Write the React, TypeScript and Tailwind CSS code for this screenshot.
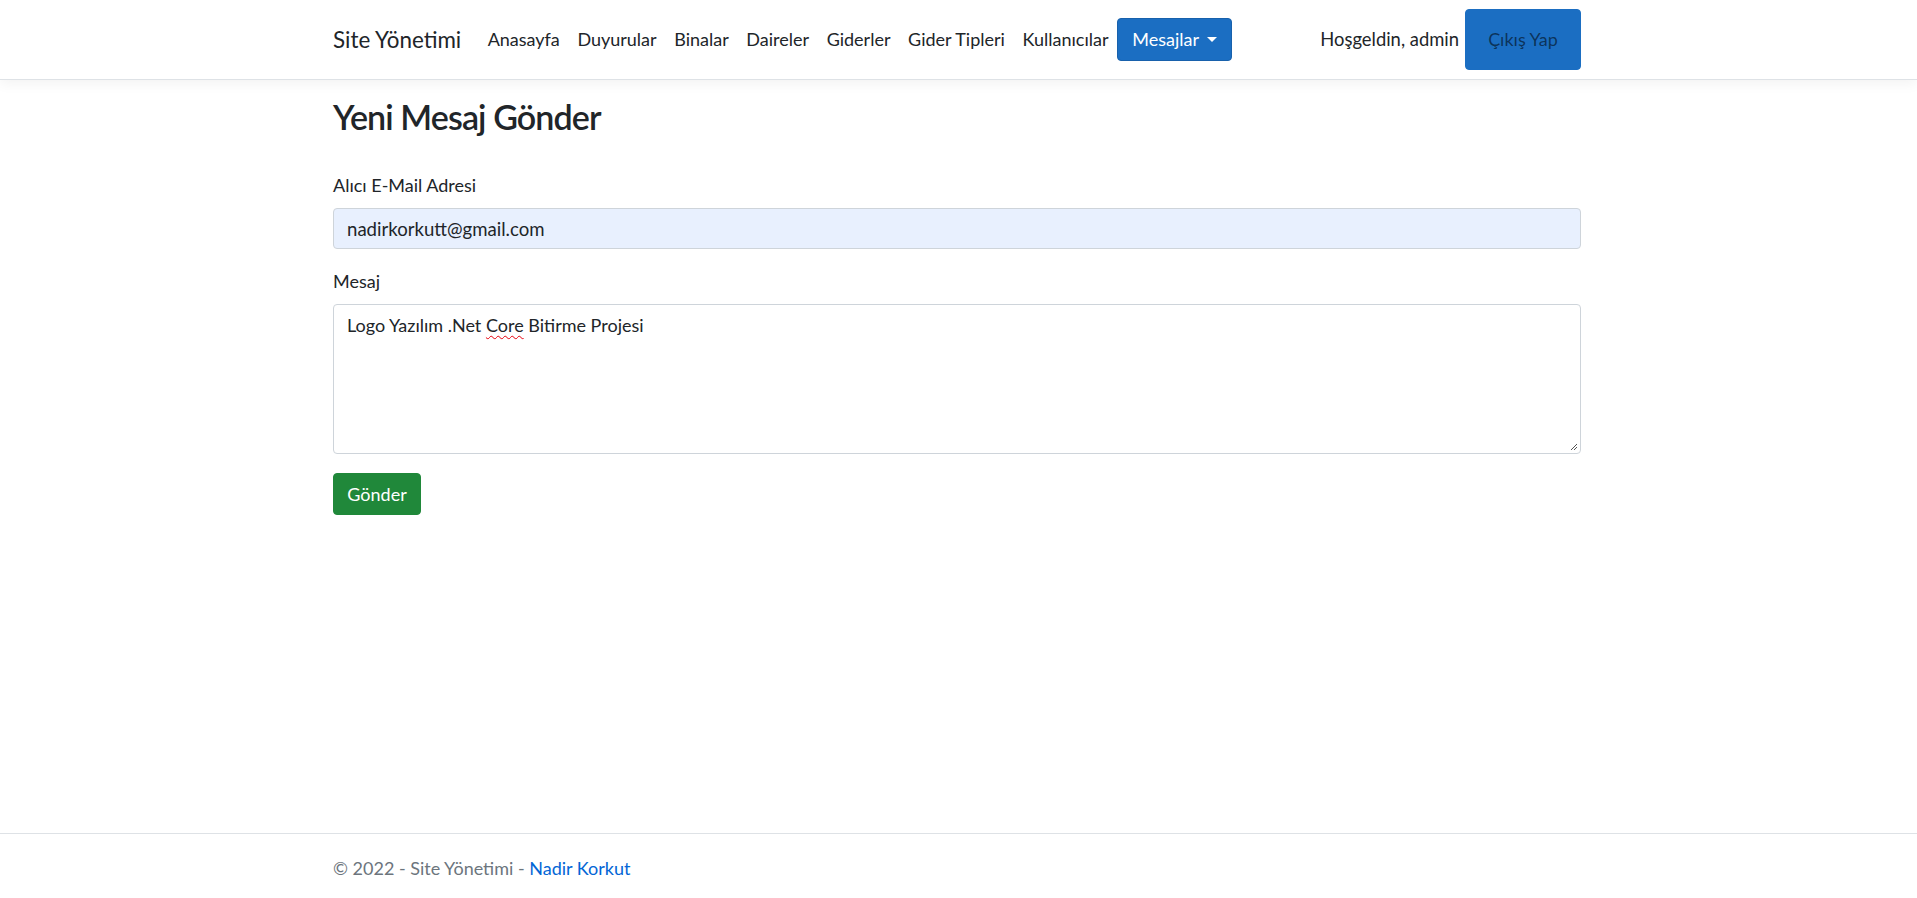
import React from 'react'

const navLinks = ['Anasayfa', 'Duyurular', 'Binalar', 'Daireler', 'Giderler', 'Gider Tipleri', 'Kullanıcılar']

function Navbar() {
  return (
    <header className="h-[80px] shrink-0 border-b border-[#dee2e6] bg-white shadow-[0_4px_12px_rgba(0,0,0,0.05)]">
      <div className="mx-auto flex h-full w-[1251px] items-center pr-[3px]">
        <a href="#" className="mr-[17.6px] text-[22.4px] leading-[33px] text-[#212529]">
          Site Yönetimi
        </a>
        <nav className="flex items-center">
          {navLinks.map((l) => (
            <a key={l} href="#" className="px-[8.8px] text-[#212529]">
              {l}
            </a>
          ))}
          <button
            type="button"
            className="flex h-[43px] items-center rounded-[4px] border border-[#1861ac] bg-[#1b6ec2] px-[14px] text-white"
          >
            Mesajlar
            <span className="ml-[8px] inline-block h-0 w-0 border-x-[5.3px] border-t-[5.3px] border-x-transparent border-t-white" />
          </button>
        </nav>
        <div className="ml-auto flex items-center gap-[6px]">
          <span className="text-[18.4px]">Hoşgeldin, admin</span>
          <button
            type="button"
            className="h-[61px] w-[116px] rounded-[4px] border border-[#1b6ec2] bg-[#1b6ec2] text-[rgba(0,0,0,0.55)]"
          >
            Çıkış Yap
          </button>
        </div>
      </div>
    </header>
  )
}

function ResizeGrip() {
  return (
    <svg className="absolute bottom-[2px] right-[2px]" width="9" height="9" viewBox="0 0 9 9">
      <path d="M8 2 L2 8 M8 5 L5 8" stroke="#555" strokeWidth="1" />
    </svg>
  )
}

export default function App() {
  return (
    <div className="flex h-screen flex-col bg-white text-[18px] leading-[26.4px] text-[#212529] [font-family:Lato,'Liberation_Sans',sans-serif]">
      <Navbar />

      <main className="mx-auto w-[1251px] pr-[3px] pt-[16px]">
        <h2 className="text-[34px] font-semibold leading-[42px] tracking-[-0.9px]">Yeni Mesaj Gönder</h2>

        <form className="mt-[34px]" onSubmit={(e) => e.preventDefault()}>
          <label className="mb-[9.6px] block">Alıcı E-Mail Adresi</label>
          <input
            type="email"
            readOnly
            defaultValue="nadirkorkutt@gmail.com"
            className="block h-[41px] w-full rounded-[4px] border border-[#ced4da] bg-[#e8f0fe] px-[13px] text-[18.6px] text-[#212529] outline-none"
          />

          <label className="mb-[9.6px] mt-[19px] block">Mesaj</label>
          <div className="relative h-[150px] w-full rounded-[4px] border border-[#ced4da] bg-white px-[13px] pt-[6.6px]">
            Logo Yazılım .Net{' '}
            <span className="underline decoration-red-600 decoration-wavy decoration-1 underline-offset-[3px]">Core</span>{' '}
            Bitirme Projesi
            <ResizeGrip />
          </div>

          <button
            type="submit"
            className="mt-[19px] h-[42px] w-[88px] rounded-[4px] border border-[#20883a] bg-[#20883a] text-white"
          >
            Gönder
          </button>
        </form>
      </main>

      <footer className="mt-auto h-[65px] shrink-0 border-t border-[#dee2e6]">
        <div className="mx-auto w-[1251px] pr-[3px] pt-[21px] text-[#6c757d]">
          © 2022 - Site Yönetimi -{' '}
          <a href="#" className="text-[#0366d6]">
            Nadir Korkut
          </a>
        </div>
      </footer>
    </div>
  )
}
